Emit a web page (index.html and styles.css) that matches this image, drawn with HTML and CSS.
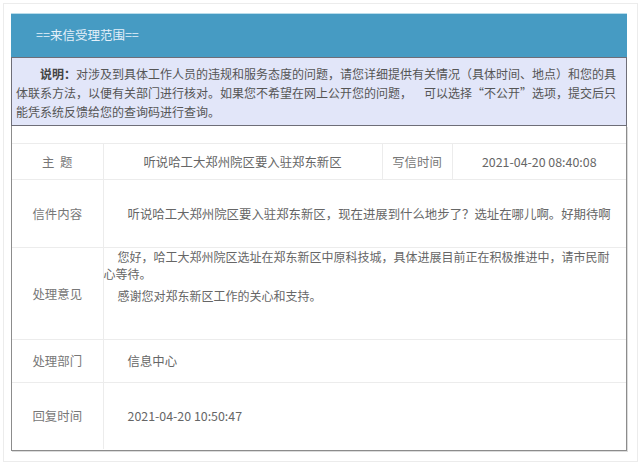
FILE: index.html
```html
<!DOCTYPE html>
<html lang="zh-CN">
<head>
    <meta charset="UTF-8">
    <meta name="viewport" content="width=device-width, initial-scale=1.0">
    <title>来信详情</title>
    <link rel="stylesheet" href="styles.css">
</head>
<body>
    <div class="page">
        <div class="panel">
            <div class="panel-head">==来信受理范围==</div>
            <div class="notice">
                <p><b>说明：</b>对涉及到具体工作人员的违规和服务态度的问题，请您详细提供有关情况（具体时间、地点）和您的具体联系方法，以便有关部门进行核对。如果您不希望在网上公开您的问题， 可以选择“不公开”选项，提交后只能凭系统反馈给您的查询码进行查询。</p>
            </div>

            <div class="letter">
                <table>
                    <colgroup>
                        <col class="col-label">
                        <col class="col-subject">
                        <col class="col-label2">
                        <col>
                    </colgroup>
                    <tr class="row-subject">
                        <td class="label">主&nbsp;&nbsp;题</td>
                        <td class="center">听说哈工大郑州院区要入驻郑东新区</td>
                        <td class="label">写信时间</td>
                        <td class="center">2021-04-20 08:40:08</td>
                    </tr>
                    <tr class="row-content">
                        <td class="label">信件内容</td>
                        <td colspan="3" class="text">听说哈工大郑州院区要入驻郑东新区，现在进展到什么地步了？选址在哪儿啊。好期待啊</td>
                    </tr>
                    <tr class="row-reply">
                        <td class="label">处理意见</td>
                        <td colspan="3" class="reply">
                            <p>您好，哈工大郑州院区选址在郑东新区中原科技城，具体进展目前正在积极推进中，请市民耐心等待。</p>
                            <p>感谢您对郑东新区工作的关心和支持。</p>
                        </td>
                    </tr>
                    <tr class="row-dept">
                        <td class="label">处理部门</td>
                        <td colspan="3" class="text">信息中心</td>
                    </tr>
                    <tr class="row-time">
                        <td class="label">回复时间</td>
                        <td colspan="3" class="text">2021-04-20 10:50:47</td>
                    </tr>
                </table>
            </div>
        </div>
    </div>
</body>
</html>
```

FILE: styles.css
```css
body {
    margin: 0;
    background-color: #fff;
    font-family: "Noto Sans CJK SC", "Noto Sans", sans-serif;
    color: #666;
}

.page {
    margin: 3px;
    height: 448px;
    padding: 9px 8px 0 7px;
    border: 1px solid #ececec;
}

.panel {
    width: 616px;
}

.panel-head {
    height: 44px;
    line-height: 42px;
    padding-left: 25px;
    background-color: #469bc3;
    border-top: 1px solid #b9dcea;
    box-sizing: border-box;
    color: #e4f0fa;
    font-size: 12.5px;
}

.notice {
    height: 69px;
    box-sizing: border-box;
    padding: 6px 4px 0 4px;
    background-color: #e2e6f9;
    border: 1px solid #6e6e78;
    color: #555;
    font-size: 12px;
    font-variant-east-asian: full-width;
}

.notice p {
    margin: 0;
    line-height: 19px;
    text-indent: 2em;
}

.notice b {
    color: #444;
}

.letter {
    height: 325px;
    box-sizing: border-box;
    padding-top: 17px;
    border: 1px solid #8c8c8c;
    border-top: none;
    box-shadow: 1px 1px 0 #dcdcdc;
}

table {
    width: 100%;
    border-collapse: collapse;
    font-size: 12.4px;
}

td {
    border: 1px solid #ececec;
    padding: 0;
}

tr td:first-child {
    border-left: none;
}

tr td:last-child {
    border-right: none;
}

.col-label {
    width: 91px;
}

.col-subject {
    width: 279px;
}

.col-label2 {
    width: 70px;
}

.label {
    text-align: center;
    color: #777;
}

.center {
    text-align: center;
}

.text {
    padding-left: 24px;
}

.row-subject td {
    height: 35px;
}

.row-content td {
    height: 67px;
}

.row-reply td {
    height: 91px;
}

.row-dept td {
    height: 42px;
}

.row-time td {
    height: 66px;
    border-bottom: none;
}

.reply {
    vertical-align: top;
    font-size: 12px;
    padding-right: 8px;
}

.reply p {
    margin: 0 0 5px;
    line-height: 17px;
    text-indent: 14px;
}
```
